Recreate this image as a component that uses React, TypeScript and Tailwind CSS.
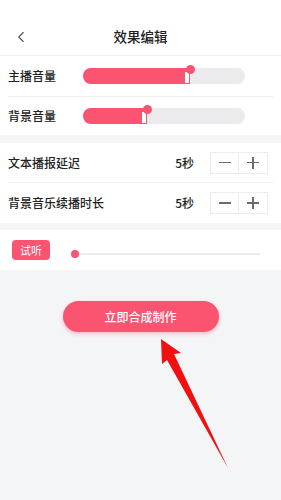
import { ChevronLeft } from "lucide-react"

const font = { fontFamily: '"Noto Sans CJK SC", "Noto Sans", sans-serif' }

function VolumeSlider({ fill }: { fill: number }) {
  return (
    <div className="relative h-[16px] w-[162px] rounded-full bg-[#ebebed]">
      <div className="h-full rounded-l-full bg-[#fa5471]" style={{ width: fill }} />
      <div className="absolute top-[4px] h-[11px] w-[4px] bg-white" style={{ left: fill - 5 }} />
      <div
        className="absolute -top-[3px] h-[9px] w-[9px] rounded-full bg-[#fa5471]"
        style={{ left: fill - 4 }}
      />
    </div>
  )
}

function Stepper() {
  return (
    <div className="flex h-[22px] border border-[#ececec]">
      <div className="flex w-[28px] items-center justify-center border-r border-[#ececec]">
        <div className="h-[1.5px] w-[12px] bg-[#6b6b6b]" />
      </div>
      <div className="relative flex w-[28px] items-center justify-center">
        <div className="h-[1.5px] w-[12px] bg-[#6b6b6b]" />
        <div className="absolute h-[12px] w-[1.5px] bg-[#6b6b6b]" />
      </div>
    </div>
  )
}

export default function App() {
  return (
    <div className="relative h-[500px] w-[281px] overflow-hidden bg-[#f4f5f7] text-[#222]" style={font}>
      <header className="relative flex h-[55px] items-end justify-center bg-white pb-[9px]">
        <ChevronLeft className="absolute left-[12px] top-[28px] h-[18px] w-[18px] text-[#555]" strokeWidth={1.5} />
        <h1 className="text-[13.5px] font-medium">效果编辑</h1>
      </header>

      <section className="border-t border-[#f0f0f0] bg-white px-[8px]">
        <div className="flex h-[41px] items-center border-b border-[#eeeeee]">
          <span className="w-[75px] text-[12px] font-medium">主播音量</span>
          <VolumeSlider fill={107} />
        </div>
        <div className="flex h-[38px] items-center">
          <span className="w-[75px] text-[12px] font-medium">背景音量</span>
          <VolumeSlider fill={64} />
        </div>
      </section>

      <section className="mt-[8px] bg-white px-[8px]">
        <div className="flex h-[40px] items-center border-b border-[#eeeeee]">
          <span className="flex-1 text-[12px] font-medium">文本播报延迟</span>
          <span className="mr-[16px] text-[12px] font-medium">5秒</span>
          <Stepper />
          <span className="w-[5px]" />
        </div>
        <div className="flex h-[40px] items-center">
          <span className="flex-1 text-[12px] font-medium">背景音乐续播时长</span>
          <span className="mr-[16px] text-[12px] font-medium">5秒</span>
          <Stepper />
          <span className="w-[5px]" />
        </div>
      </section>

      <section className="mt-[7px] flex h-[40px] items-center bg-white pl-[12px] pr-[21px]">
        <button className="h-[20px] w-[38px] rounded-[4px] bg-[#fa5471] text-[11px] text-white">试听</button>
        <div className="relative ml-[21px] mt-[8px] flex flex-1 items-center">
          <div className="h-[8px] w-[8px] rounded-full bg-[#fa5471]" />
          <div className="h-[2px] flex-1 bg-[#ececec]" />
        </div>
      </section>

      <div className="mt-[31px] flex justify-center">
        <button className="h-[31px] w-[156px] rounded-full bg-[#fa5471] text-[12px] font-medium text-white shadow-[0_2px_4px_rgba(250,84,113,0.35)]">
          立即合成制作
        </button>
      </div>

      <svg className="absolute left-0 top-0" width="281" height="500" viewBox="0 0 281 500">
        <polygon points="161,339 181,353 174,354 228,468 167,360 162,364" fill="#f10f0f" />
      </svg>
    </div>
  )
}
